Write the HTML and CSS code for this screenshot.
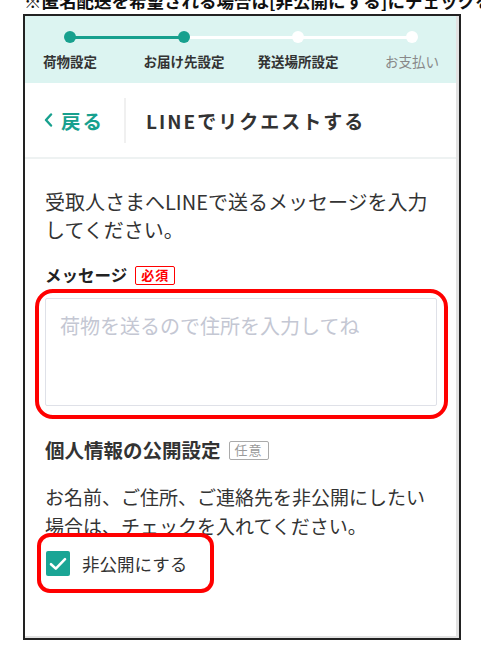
FILE: index.html
```html
<!DOCTYPE html>
<html lang="ja">
<head>
<meta charset="UTF-8">
<meta name="viewport" content="width=device-width, initial-scale=1.0">
<title>LINEでリクエストする</title>
<link rel="stylesheet" href="styles.css">
</head>
<body>

<p class="caption">※匿名配送を希望される場合は[非公開にする]にチェックを入れてください</p>

<div class="phone">
    <div class="screen">
        <!-- ステップ表示 -->
        <div class="steps">
            <div class="steps-grid">
                <div class="step first done">
                    <div class="dot-row"><span class="dot"></span></div>
                    <div class="step-label">荷物設定</div>
                </div>
                <div class="step current">
                    <div class="dot-row"><span class="dot"></span></div>
                    <div class="step-label">お届け先設定</div>
                </div>
                <div class="step">
                    <div class="dot-row"><span class="dot"></span></div>
                    <div class="step-label">発送場所設定</div>
                </div>
                <div class="step last">
                    <div class="dot-row"><span class="dot"></span></div>
                    <div class="step-label muted">お支払い</div>
                </div>
            </div>
        </div>

        <!-- ヘッダー -->
        <div class="header">
            <a class="back" href="#">
                <svg width="9" height="14" viewBox="0 0 9 14"><path d="M7 1.5 L2 7 L7 12.5" fill="none" stroke="#17a08e" stroke-width="2.4" stroke-linecap="round" stroke-linejoin="round"/></svg>
                <span>戻る</span>
            </a>
            <div class="divider"></div>
            <h1 class="title">LINEでリクエストする</h1>
        </div>

        <div class="content">
            <p class="desc">受取人さまへLINEで送るメッセージを入力してください。</p>

            <div class="field-label">メッセージ <span class="badge required">必須</span></div>
            <div class="mark mark-message">
                <textarea class="message" placeholder="荷物を送るので住所を入力してね"></textarea>
            </div>

            <div class="section-label">個人情報の公開設定 <span class="badge optional">任意</span></div>
            <p class="note">お名前、ご住所、ご連絡先を非公開にしたい場合は、チェックを入れてください。</p>

            <div class="mark mark-check">
                <label class="check">
                    <span class="box">
                        <svg width="18" height="14" viewBox="0 0 18 14"><path d="M2 7.2 L6.8 11.6 L16 2.2" fill="none" stroke="#fff" stroke-width="2.6" stroke-linecap="round" stroke-linejoin="round"/></svg>
                    </span>
                    <span>非公開にする</span>
                </label>
            </div>
        </div>
    </div>
</div>

</body>
</html>
```

FILE: styles.css
```css
/* 全体 */
body {
    margin: 0;
    padding: 0;
    background-color: #fff;
    font-family: "Noto Sans CJK JP", "Noto Sans", sans-serif;
    color: #333;
}

.caption {
    margin: -9px 0 3px 0;
    padding-left: 24px;
    font-size: 17.5px;
    line-height: 20px;
    font-weight: bold;
    color: #111;
    white-space: nowrap;
    overflow: hidden;
}

.phone {
    margin-left: 23px;
    width: 438px;
    height: 626px;
    box-sizing: border-box;
    border: 2px solid #222;
    overflow: hidden;
}

.screen {
    height: 100%;
    box-sizing: border-box;
    border-right: 3px solid #e2e2e2;
    border-bottom: 2px solid #e2e2e2;
    background-color: #fff;
}

/* ステップ */
.steps {
    padding: 15px 0 13px 0;
    background-color: #dcf4f1;
    overflow: hidden;
}

.steps-grid {
    display: grid;
    grid-template-columns: repeat(4, 114px);
    margin-left: -12px;
}

.step {
    display: flex;
    flex-direction: column;
    align-items: center;
    --left: #fff;
    --right: #fff;
}

.step.done {
    --right: #17a08e;
}

.step.current {
    --left: #17a08e;
}

.step.first {
    --left: transparent;
}

.step.last {
    --right: transparent;
}

.dot-row {
    width: 100%;
    height: 12px;
    display: flex;
    justify-content: center;
    background: linear-gradient(to right, var(--left) 50%, var(--right) 50%) center / 100% 3px no-repeat;
}

.dot {
    width: 12px;
    height: 12px;
    border-radius: 50%;
    background-color: #fff;
}

.done .dot,
.current .dot {
    background-color: #17a08e;
}

.step-label {
    margin-top: 9px;
    font-size: 13.5px;
    line-height: 18px;
    font-weight: bold;
    color: #333;
    white-space: nowrap;
}

.step-label.muted {
    font-weight: normal;
    color: #888;
}

/* ヘッダー */
.header {
    display: flex;
    align-items: center;
    height: 74px;
    border-bottom: 2px solid #eef2f2;
}

.back {
    display: flex;
    align-items: center;
    gap: 8px;
    padding-left: 19px;
    color: #17a08e;
    text-decoration: none;
    font-size: 19.5px;
    font-weight: bold;
    letter-spacing: 2px;
}

.divider {
    width: 2px;
    height: 45px;
    margin-left: 20px;
    background-color: #f0f0f0;
}

.title {
    margin: 0 0 0 20px;
    font-size: 19px;
    font-weight: bold;
    letter-spacing: 2px;
    color: #333;
}

/* 入力エリア */
.content {
    padding: 0 19px 0 20px;
}

.desc {
    margin: 29px 0 0 0;
    font-size: 20px;
    line-height: 28px;
}

.field-label {
    margin-top: 20px;
    display: flex;
    align-items: center;
    font-size: 16.5px;
    line-height: 22px;
    font-weight: bold;
    color: #222;
}

.section-label {
    margin-top: 19px;
    display: flex;
    align-items: center;
    font-size: 19.5px;
    line-height: 24px;
    font-weight: bold;
    color: #333;
}

.badge {
    margin-left: 8px;
    padding: 0 5px;
    height: 19px;
    box-sizing: border-box;
    border-radius: 2px;
    font-size: 13px;
    line-height: 16px;
    letter-spacing: 1px;
}

.badge.required {
    border: 1.5px solid #f00;
    color: #f00;
    font-weight: bold;
}

.badge.optional {
    border: 1.5px solid #aaa;
    color: #999;
    font-weight: normal;
}

.mark {
    border: 4px solid #f00;
    box-sizing: border-box;
}

.mark-message {
    margin: 3px -11px 0 -10px;
    padding: 5px 7px 9px 6px;
    border-radius: 18px;
}

.message {
    display: block;
    width: 100%;
    height: 108px;
    box-sizing: border-box;
    padding: 12px 14px;
    border: 1.5px solid #dfe1e8;
    border-radius: 2px;
    resize: none;
    font-family: "Noto Sans CJK JP", sans-serif;
    font-size: 20px;
    line-height: 30px;
    color: #333;
}

.message::placeholder {
    color: #c4c7d3;
}

.note {
    margin: 20px 0 0 0;
    font-size: 19px;
    line-height: 29px;
}

.mark-check {
    display: inline-block;
    margin: -7px 0 0 -8px;
    padding: 14px 23px 13px 5px;
    border-radius: 13px;
}

.check {
    display: flex;
    align-items: center;
    gap: 12px;
    font-size: 17.5px;
    line-height: 25px;
    color: #333;
}

.box {
    width: 24px;
    height: 25px;
    border-radius: 2px;
    background-color: #1aa595;
    display: flex;
    align-items: center;
    justify-content: center;
}
```
